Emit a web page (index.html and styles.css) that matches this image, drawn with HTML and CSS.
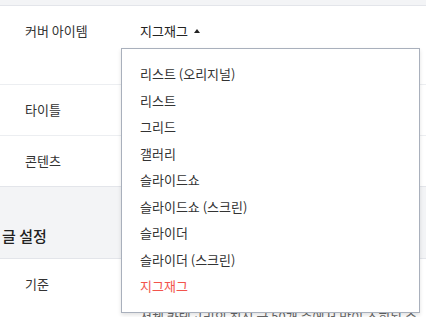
FILE: index.html
```html
<!DOCTYPE html>
<html>

<head>
    <title>글 설정</title>

    <link rel="stylesheet" href="styles.css">
</head>

<body>
    <div class="page">
        <section class="card">
            <div class="row row-cover">
                <div class="label">커버 아이템</div>
                <div class="value">
                    <button class="select">지그재그 <span class="caret"></span></button>
                    <ul class="dropdown">
                        <li>리스트 (오리지널)</li>
                        <li>리스트</li>
                        <li>그리드</li>
                        <li>갤러리</li>
                        <li>슬라이드쇼</li>
                        <li>슬라이드쇼 (스크린)</li>
                        <li>슬라이더</li>
                        <li>슬라이더 (스크린)</li>
                        <li class="selected">지그재그</li>
                    </ul>
                </div>
            </div>
            <div class="row">
                <div class="label">타이틀</div>
            </div>
            <div class="row">
                <div class="label">콘텐츠</div>
            </div>
        </section>

        <h2 class="section-title">글 설정</h2>

        <section class="card">
            <div class="row">
                <div class="label">기준</div>
                <div class="value">
                    <p class="desc">전체 카테고리의 최신 글 50개 중에서 많이 조회된 순</p>
                </div>
            </div>
        </section>
    </div>
</body>

</html>
```

FILE: styles.css
```css
body {
    margin: 0;
    background-color: #f3f4f6;
    font-family: "Noto Sans CJK KR", "Noto Sans", sans-serif;
    color: #333333;
    font-size: 13px;
    overflow: hidden;
}

.page {
    padding-top: 5px;
}

.card {
    background-color: #ffffff;
    border-top: 1px solid #e3e5ea;
    border-bottom: 1px solid #e3e5ea;
}

.row {
    display: flex;
    padding: 0 0 0 25px;
    border-bottom: 1px solid #eceef1;
    line-height: 18px;
}

.row:last-child {
    border-bottom: none;
}

.label {
    width: 115px;
    padding: 16px 0;
}

.row-cover {
    height: 78px;
}

.row:not(.row-cover) .label {
    padding: 16px 0 16px;
    height: 18px;
}

.value {
    position: relative;
    flex: 1;
}

.select {
    margin-top: 16px;
    padding: 0;
    border: none;
    background: none;
    font: inherit;
    color: #222222;
    line-height: 18px;
}

.caret {
    display: inline-block;
    width: 0;
    height: 0;
    margin-left: 3px;
    vertical-align: 3px;
    border-left: 3.5px solid transparent;
    border-right: 3.5px solid transparent;
    border-bottom: 4px solid #222222;
}

.dropdown {
    position: absolute;
    top: 42px;
    left: -19px;
    width: 297px;
    margin: 0;
    padding: 12px 0;
    list-style: none;
    background-color: #ffffff;
    border: 1px solid #a9b0bc;
    box-shadow: 0 2px 4px rgba(0, 0, 0, 0.12);
    z-index: 2;
}

.dropdown li {
    padding-left: 18px;
    height: 26.5px;
    line-height: 26.5px;
    color: #333333;
}

.dropdown li.selected {
    color: #f2544c;
}

.section-title {
    margin: 0;
    padding: 38px 0 11px 2px;
    font-size: 15px;
    font-weight: 500;
    color: #222222;
    line-height: 22px;
}

.desc {
    margin: 49px 0 0;
    color: #666666;
    white-space: nowrap;
}
```
